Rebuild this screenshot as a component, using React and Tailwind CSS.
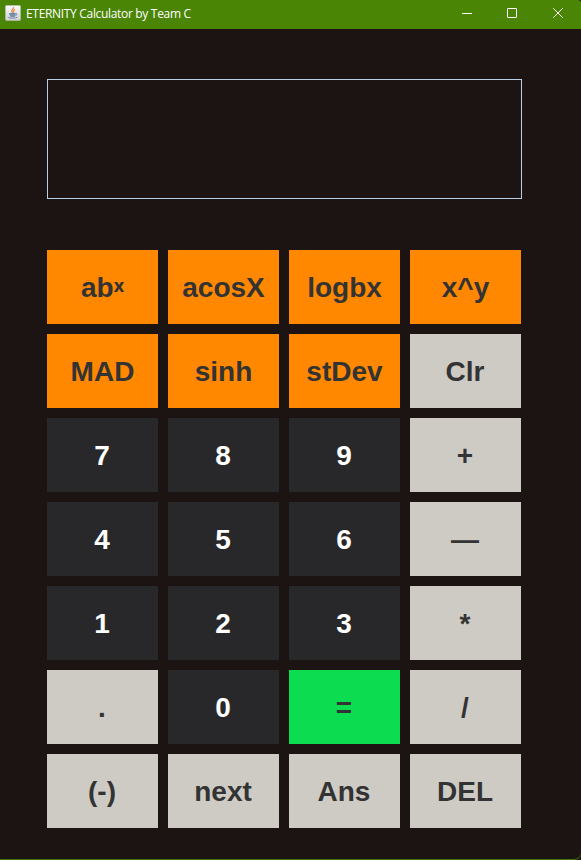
const TONES = {
  orange: 'bg-[#ff8800] text-[#333333]',
  gray: 'bg-[#cecbc4] pr-px text-[#333333]',
  dark: 'bg-[#28282a] pr-px text-white',
  green: 'bg-[#0cdc50] pr-px text-[#333333]',
};

const power = (
  <span className="flex">
    ab
    <span className="relative -top-[5px] h-[31px] font-['Noto_Sans',sans-serif] text-[18px] font-bold leading-[36px]">x</span>
  </span>
);

const KEYS = [
  [power, 'orange'], ['acosX', 'orange'], ['logbx', 'orange'], ['x^y', 'orange'],
  ['MAD', 'orange'], ['sinh', 'orange'], ['stDev', 'orange'], ['Clr', 'gray'],
  ['7', 'dark'], ['8', 'dark'], ['9', 'dark'], ['+', 'gray'],
  ['4', 'dark'], ['5', 'dark'], ['6', 'dark'], ['—', 'gray'],
  ['1', 'dark'], ['2', 'dark'], ['3', 'dark'], ['*', 'gray'],
  ['.', 'gray'], ['0', 'dark'], ['=', 'green'], ['/', 'gray'],
  ['(-)', 'gray'], ['next', 'gray'], ['Ans', 'gray'], ['DEL', 'gray'],
];

function JavaIcon() {
  return (
    <svg className="ml-[5px] size-4 shrink-0" viewBox="0 0 16 16" fill="none">
      <defs>
        <linearGradient id="tile" x1="0" y1="0" x2="0" y2="1">
          <stop stopColor="#fbfbfb" />
          <stop offset="1" stopColor="#cfcfd4" />
        </linearGradient>
      </defs>
      <rect x="0.5" y="0.5" width="15" height="15" rx="1" fill="url(#tile)" stroke="#b9c3b4" strokeWidth="0.6" />
      <path d="M8.4 2.3C9.1 4 6.4 4.4 6.8 5.9 6.9 6.6 7.7 7 7.5 7.8M9.8 4.3C8.3 5.2 8.2 5.9 8.7 7.6" stroke="#e8863a" strokeWidth="1.3" />
      <path d="M4.4 8.2h6.2v1.4c0 1.2-.8 2-2 2H6.6c-1.2 0-2.2-.8-2.2-2z" fill="#7f9ab5" />
      <path d="M4.4 8.7h6.2M5.2 11.2h4.8" stroke="#56789c" strokeWidth="0.9" />
      <path d="M10.6 8.4c2-.3 1.8 1.7-.1 2.2M3.4 12.4c2 1 7 1 9-.2" stroke="#6c8aa8" strokeWidth="1" />
    </svg>
  );
}

function TitleBar() {
  return (
    <header className="flex h-[29px] shrink-0 items-start bg-[#4a8506] pt-[5px] text-white">
      <JavaIcon />
      <h1 className="ml-[5px] mt-px w-[166px] whitespace-nowrap font-['Open_Sans','Noto_Sans',sans-serif] text-[12px] leading-4 tracking-[-0.32px]">
        ETERNITY Calculator by Team C
      </h1>
      <div className="ml-auto mr-[18px] flex gap-[35px] pt-[3px]">
        <svg className="h-[10px] w-[10px]" viewBox="0 0 10 10" stroke="currentColor"><path d="M0 5.5h10" /></svg>
        <svg className="h-[10px] w-[10px]" viewBox="0 0 10 10" stroke="currentColor" fill="none"><rect x="0.5" y="0.5" width="9" height="9" rx="0.5" /></svg>
        <svg className="ml-px h-[10px] w-[10px]" viewBox="0 0 10 10" stroke="currentColor"><path d="M0.3 0.3l9.4 9.4M9.7 0.3L0.3 9.7" /></svg>
      </div>
    </header>
  );
}

export default function App() {
  return (
    <div className="h-[860px] w-[581px] overflow-hidden bg-[#1c1412]">
      <div className="flex h-[860px] w-[581px] flex-col overflow-hidden rounded-br-[7px] rounded-tr-[3px] border-b border-[#45780c] bg-[#1c1412]">
        <TitleBar />
        <main className="px-[47px] pt-[50px]">
          <div className="h-[120px] w-[475px] border border-[#b8cfe5]" />
          <div className="mt-[51px] grid grid-cols-[repeat(4,111px)] gap-[10px]">
            {KEYS.map(([label, tone], i) => (
              <button
                key={i}
                className={`flex h-[74px] items-center justify-center pt-[2px] font-['Liberation_Sans',Arial,sans-serif] text-[28px] font-bold leading-[32px] ${TONES[tone]}`}
              >
                {label}
              </button>
            ))}
          </div>
        </main>
      </div>
    </div>
  );
}
